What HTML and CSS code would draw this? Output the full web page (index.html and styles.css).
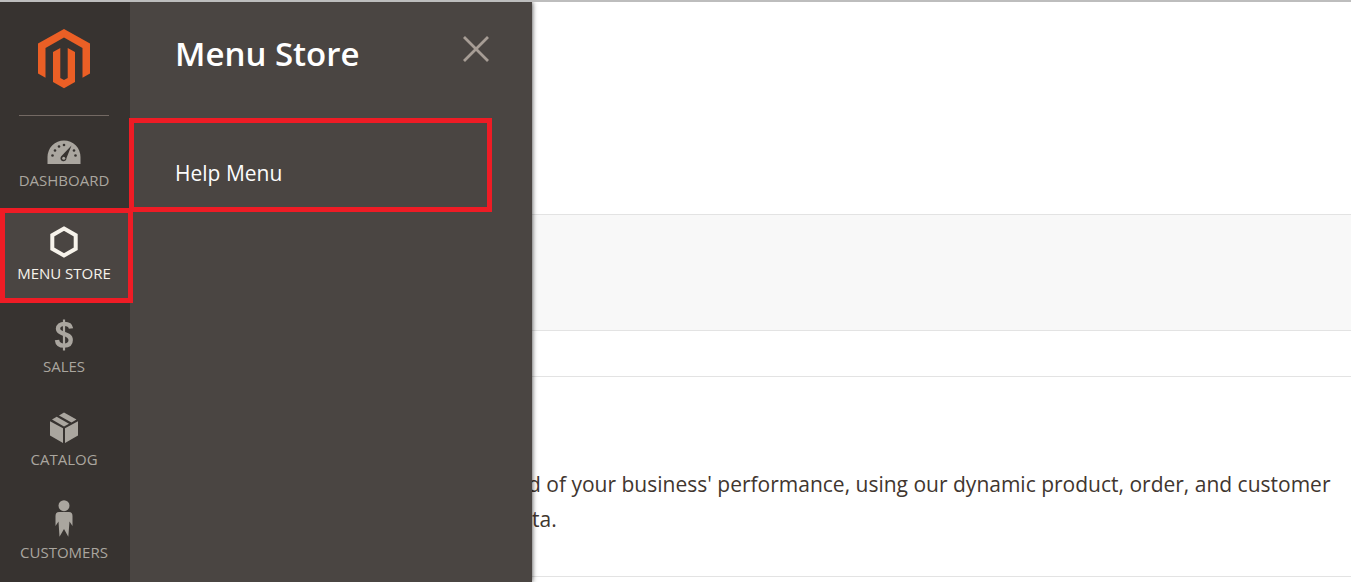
FILE: index.html
```html
<!DOCTYPE html>
<html lang="en">
<head>
<meta charset="utf-8">
<title>Dashboard</title>
<link rel="stylesheet" href="styles.css">
</head>
<body>
<div class="page">
  <nav class="sidebar" aria-label="Main">
    <a class="logo" href="#" aria-label="Home">
      <svg width="52" height="60" viewBox="0 0 52 60" fill="#eb5f25"><path d="M26 0 52 14.500V44.500L44.500 48.700V19L26 8.500 7.500 19V48.700L0 44.500V14.500z"/><path d="M15 23 22.300 19V49L26 51 29.700 49V19L37 23V53L26 59.300 15 53z"/></svg>
    </a>
    <ul class="menu">
      <li><a class="item" href="#">
        <span class="icon"><svg width="34" height="25" viewBox="0 0 34 25"><path d="M.500 24V17a16.500 16.500 0 0 1 33 0V24z" fill="currentColor"/><g fill="#373330"><circle cx="5.500" cy="15.500" r="1.300"/><circle cx="8" cy="10.500" r="1.300"/><circle cx="12" cy="6.500" r="1.300"/><circle cx="17" cy="5" r="1.300"/><circle cx="27" cy="10.500" r="1.300"/><circle cx="28.500" cy="15.500" r="1.300"/><path d="M24.500 5.500 14 16.500a3 3 0 0 0 2 4.700 3 3 0 0 0 3.500-3.200z"/></g><circle cx="16.700" cy="18.200" r="1.500" fill="currentColor"/></svg></span>
        <span>DASHBOARD</span></a></li>
      <li><a class="item current" href="#">
        <span class="icon"><svg width="28" height="32" viewBox="0 0 28 32"><path d="M14 2.600 25.700 9.200V22.800L14 29.400 2.300 22.800V9.200z" fill="none" stroke="currentColor" stroke-width="4"/></svg></span>
        <span>MENU STORE</span></a></li>
      <li><a class="item" href="#">
        <span class="icon"><svg width="20" height="32" viewBox="0 0 20 32"><path d="M17 9.500C16.500 6.300 14.200 4.900 10.400 4.900 6.500 4.900 4 6.800 4 9.800 4 16.400 16.700 13.200 16.700 21c0 3.500-2.400 5.600-6.600 5.600-4 0-6.700-1.900-7.100-5.700" fill="none" stroke="currentColor" stroke-width="4.400"/><path d="M10 0.500v31" stroke="currentColor" stroke-width="2.200"/></svg></span>
        <span>SALES</span></a></li>
      <li><a class="item" href="#">
        <span class="icon"><svg width="28" height="32" viewBox="0 0 28 32" fill="currentColor"><path d="M0 9.200 13 16.200V31L0 23.500zM15 16.200 28 9.200V23.500L15 31zM2 7.500 6.700 4.800 19 11.800 14 14.500zM9 3.500 14 0.500 26.500 7.600 21.500 10.400z"/></svg></span>
        <span>CATALOG</span></a></li>
      <li><a class="item" href="#">
        <span class="icon"><svg width="18" height="37" viewBox="0 0 18 37" fill="currentColor"><circle cx="9" cy="5.700" r="5.500"/><path d="M4 12H14Q17.500 12 17.500 16V26L14.500 21.500 13.300 36.800 9 29 4.500 36.800 3.500 21.500.500 26V16Q.500 12 4 12z"/></svg></span>
        <span>CUSTOMERS</span></a></li>
    </ul>
  </nav>
  <section class="panel">
    <header class="panel-head">
      <h1>Menu Store</h1>
      <button class="close" type="button" aria-label="Close"><svg width="26" height="26" viewBox="0 0 26 26"><path d="M1 1 25 25M25 1 1 25" stroke="currentColor" stroke-width="2.800"/></svg></button>
    </header>
    <a class="sublink" href="#">Help Menu</a>
  </section>
  <main class="content">
    <div class="top"></div>
    <div class="band"></div>
    <div class="strip"></div>
    <div class="notice"><p>d of your business' performance, using our dynamic product, order, and customer<br><span class="tail">ta.</span></p></div>
  </main>
  <div class="mark mark-item"></div>
  <div class="mark mark-link"></div>
</div>
</body>
</html>
```
FILE: styles.css
```css
* { box-sizing: border-box; }
body {
  margin: 0;
  font-family: "Open Sans", "Noto Sans", sans-serif;
  color: #41362f;
  background: #fff;
}
.page {
  position: relative;
  display: flex;
  min-height: 100vh;
  border-top: 2px solid #bdbdbd;
  overflow: hidden;
}
.sidebar {
  position: relative;
  z-index: 3;
  flex: 0 0 130px;
  background: #373330;
}
.logo {
  display: flex;
  justify-content: center;
  margin: 0 21px 0 19px;
  padding: 27px 0 26px;
  border-bottom: 1px solid #736963;
}
.logo svg { display: block; }
.menu { list-style: none; margin: 0; padding: 0; }
.item {
  display: flex;
  flex-direction: column;
  align-items: center;
  gap: 5px;
  height: 93px;
  padding: 12px 2px 0 0;
  font-size: 15px;
  line-height: 20px;
  color: #aaa69f;
  text-decoration: none;
  white-space: nowrap;
}
.icon { display: flex; align-items: flex-end; height: 37px; }
.current { color: #f7f3eb; background: #4a4542; }
/* Red frames laid over the current item and its submenu link */
.mark {
  position: absolute;
  z-index: 4;
  border: 5px solid #ee1c25;
  pointer-events: none;
}
.mark-item { top: 206px; left: 0; width: 133px; height: 95px; }
.mark-link { top: 116px; left: 129px; width: 363px; height: 94px; }
.panel {
  position: relative;
  z-index: 2;
  flex: 0 0 402px;
  background: #4a4542;
  box-shadow: 0 0 5px rgba(0, 0, 0, 0.8);
}
.panel-head {
  display: flex;
  justify-content: space-between;
  align-items: flex-start;
  padding: 30px 43px 0 45px;
}
h1 {
  margin: 0;
  font-size: 33px;
  line-height: 44px;
  font-weight: 600;
  color: #fff;
}
.close {
  margin-top: 4px;
  padding: 0;
  border: 0;
  background: none;
  color: #a79d95;
}
.close svg { display: block; }
.sublink {
  display: block;
  margin: 82px 45px 0;
  font-size: 21px;
  line-height: 30px;
  color: #fcfcfc;
  text-decoration: none;
}
.content { flex: 1; min-width: 0; }
.top { height: 212px; }
.band {
  height: 117px;
  background: #f8f8f8;
  border-top: 1px solid #e3e3e3;
  border-bottom: 1px solid #e3e3e3;
}
.strip { height: 46px; border-bottom: 1px solid #e3e3e3; }
.notice {
  height: 200px;
  padding-top: 90px;
  border-bottom: 1px solid #e3e3e3;
}
.notice p {
  margin: 0 0 0 -4px;
  font-size: 21px;
  line-height: 35px;
  white-space: nowrap;
}
.tail { padding-left: 4px; }
```
